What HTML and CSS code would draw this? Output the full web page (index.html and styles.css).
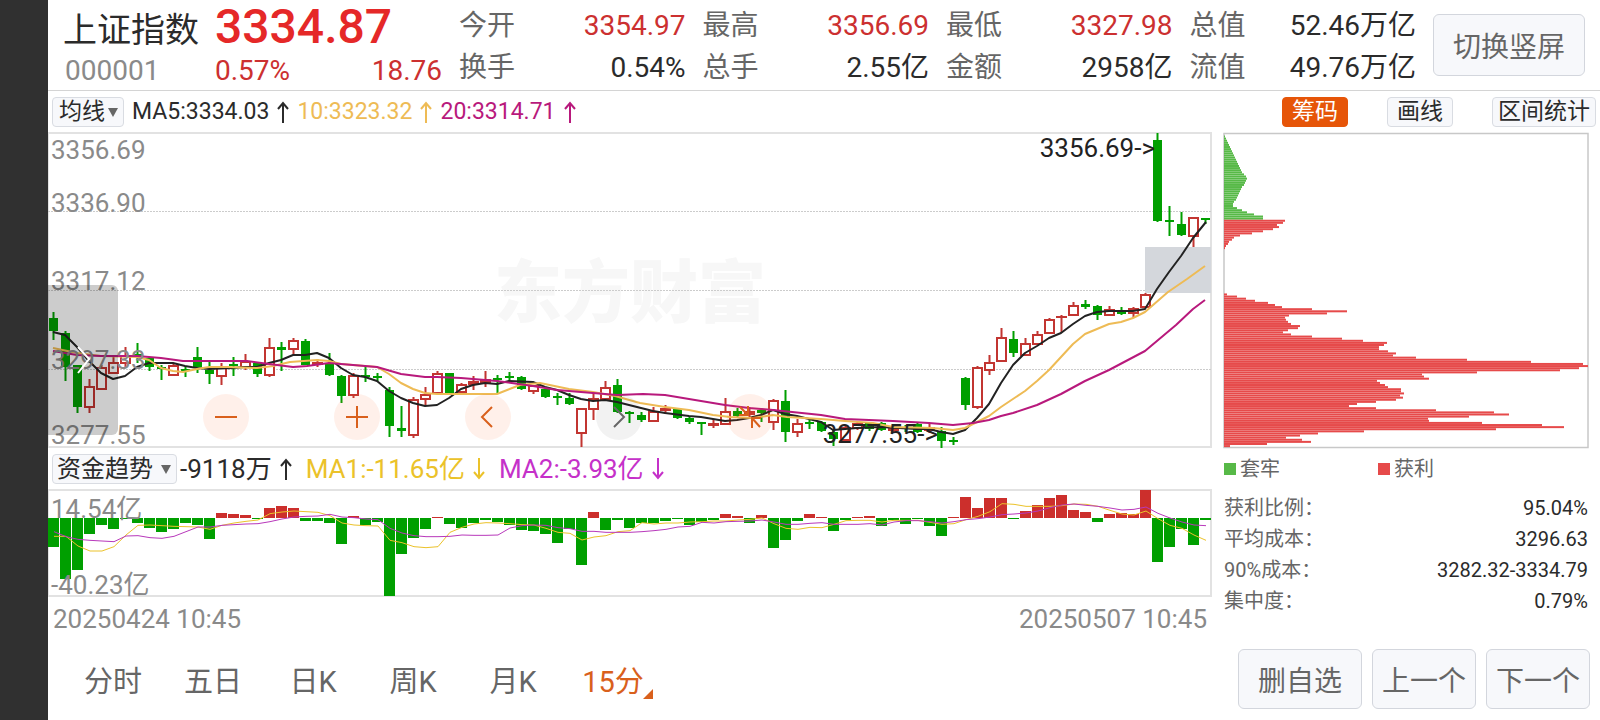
FILE: index.html
```html
<!DOCTYPE html>
<html lang="zh-CN">
<head>
    <meta charset="UTF-8">
    <meta name="viewport" content="width=device-width, initial-scale=1.0">
    <title>上证指数 000001</title>
    <link rel="stylesheet" href="styles.css">
</head>
<body>
    <header class="quote">
        <div class="summary">
            <h1 class="name">上证指数</h1>
            <div class="price">3334.87</div>
            <div class="code">000001</div>
            <div class="change"><span>0.57%</span><span>18.76</span></div>
        </div>
        <dl class="stats">
            <div><dt>今开</dt><dd class="up">3354.97</dd></div>
            <div><dt>最高</dt><dd class="up">3356.69</dd></div>
            <div><dt>最低</dt><dd class="up">3327.98</dd></div>
            <div><dt>总值</dt><dd>52.46万亿</dd></div>
            <div><dt>换手</dt><dd>0.54%</dd></div>
            <div><dt>总手</dt><dd>2.55亿</dd></div>
            <div><dt>金额</dt><dd>2958亿</dd></div>
            <div><dt>流值</dt><dd>49.76万亿</dd></div>
        </dl>
        <button class="btn rotate">切换竖屏</button>
    </header>

    <div class="toolbar">
        <div class="dropdown">
            <select aria-label="主图指标"><option>均线</option></select>
        </div>
        <span class="ma">MA5:3334.03<svg class="arrow" viewBox="0 0 12 22"><path d="M6 22V2M1 8L6 2L11 8"/></svg></span>
        <span class="ma ma10">10:3323.32<svg class="arrow" viewBox="0 0 12 22"><path d="M6 22V2M1 8L6 2L11 8"/></svg></span>
        <span class="ma ma20">20:3314.71<svg class="arrow" viewBox="0 0 12 22"><path d="M6 22V2M1 8L6 2L11 8"/></svg></span>
        <div class="tools">
            <button class="tool active">筹码</button>
            <button class="tool">画线</button>
            <button class="tool">区间统计</button>
        </div>
    </div>

    <main class="content">
        <section class="charts">
            <div class="kline">
                <div class="watermark">东方财富</div>
                <svg id="kline" viewBox="0 0 1164 316" preserveAspectRatio="none"></svg>
                <span class="label l1">3356.69</span>
                <span class="label l2">3336.90</span>
                <span class="label l3">3317.12</span>
                <span class="label l4">3297.33</span>
                <span class="label l5">3277.55</span>
                <span class="label high">3356.69-&gt;</span>
                <span class="label low">3277.55-&gt;</span>
                <button class="drawer" aria-label="展开"><svg viewBox="0 0 14 28"><path d="M1 1L12 13L1 27"/></svg></button>
                <div class="controls">
                    <button aria-label="缩小"><svg viewBox="0 0 46 46"><path d="M12 23H34"/></svg></button>
                    <button aria-label="放大"><svg viewBox="0 0 46 46"><path d="M12 23H34M23 12V34"/></svg></button>
                    <button aria-label="左移"><svg viewBox="0 0 46 46"><path d="M27 13L17 23L27 33"/></svg></button>
                    <button class="off" aria-label="右移"><svg viewBox="0 0 46 46"><path d="M18 13L28 23L18 33"/></svg></button>
                    <button aria-label="收起"><svg viewBox="0 0 46 46"><path d="M21 12V21H12M13 13L21 21M25 34V24H34M25 24L33 33"/></svg></button>
                </div>
            </div>

            <div class="toolbar fund-bar">
                <div class="dropdown wide">
                    <select aria-label="副图指标"><option>资金趋势</option></select>
                </div>
                <span class="ma">-9118万<svg class="arrow" viewBox="0 0 12 22"><path d="M6 22V2M1 8L6 2L11 8"/></svg></span>
                <span class="ma ma1">MA1:-11.65亿<svg class="arrow" viewBox="0 0 12 22"><path d="M6 0V20M1 14L6 20L11 14"/></svg></span>
                <span class="ma ma2">MA2:-3.93亿<svg class="arrow" viewBox="0 0 12 22"><path d="M6 0V20M1 14L6 20L11 14"/></svg></span>
            </div>

            <div class="fund">
                <svg id="fund" viewBox="0 0 1164 106" preserveAspectRatio="none"></svg>
                <span class="label fund-max">14.54亿</span>
                <span class="label fund-min">-40.23亿</span>
            </div>
            <div class="dates"><span>20250424 10:45</span><span>20250507 10:45</span></div>
        </section>

        <aside class="chips">
            <svg id="chips" viewBox="0 0 364 316" preserveAspectRatio="none"></svg>
            <div class="legend"><span class="loss">套牢</span><span class="gain">获利</span></div>
            <dl class="costs">
                <div><dt>获利比例：</dt><dd>95.04%</dd></div>
                <div><dt>平均成本：</dt><dd>3296.63</dd></div>
                <div><dt>90%成本：</dt><dd>3282.32-3334.79</dd></div>
                <div><dt>集中度：</dt><dd>0.79%</dd></div>
            </dl>
        </aside>
    </main>

    <footer class="bottom">
        <nav class="tabs">
            <button>分时</button>
            <button>五日</button>
            <button>日K</button>
            <button>周K</button>
            <button>月K</button>
            <button class="active">15分</button>
        </nav>
        <div class="actions">
            <button class="btn remove">删自选</button>
            <button class="btn">上一个</button>
            <button class="btn">下一个</button>
        </div>
    </footer>

    <script src="chart.js"></script>
</body>
</html>
```

FILE: styles.css
```css
* {
    box-sizing: border-box;
}
body {
    margin: 0;
    min-height: 100vh;
    border-left: 48px solid #303030;
    background: #fff;
    color: #2b2b2b;
    font-family: Roboto, "Noto Sans CJK SC", sans-serif;
    font-size: 26px;
}
h1, dl, dd {
    margin: 0;
    font-weight: normal;
}
button, select {
    padding: 0;
    border: none;
    background: none;
    color: inherit;
    font-family: inherit;
    cursor: pointer;
}

/* header */
.quote {
    display: flex;
    gap: 17px;
    height: 91px;
    padding: 5px 15px 0;
    border-bottom: 1px solid #d4d4d4;
    font-size: 28px;
}
.summary {
    display: grid;
    grid-template-columns: 152px 227px;
    grid-template-rows: 44px 42px;
    line-height: 44px;
}
.name {
    padding-top: 4px;
    font-size: 34px;
    line-height: 42px;
}
.price {
    color: #e52828;
    font-size: 48px;
    font-weight: 500;
}
.code {
    padding-left: 2px;
    color: #8a8a8a;
}
.change {
    display: flex;
    justify-content: space-between;
    color: #cc3030;
}
.stats {
    flex: 1;
    display: grid;
    grid-template-columns: repeat(4, 1fr);
    column-gap: 17px;
    line-height: 42px;
    height: 84px;
}
.stats div, .costs div {
    display: flex;
    justify-content: space-between;
}
.stats dt {
    color: #666;
}
.stats .up {
    color: #cc3030;
}
.btn {
    width: 104px;
    height: 60px;
    border: 1px solid #d3d6dd;
    border-radius: 6px;
    background: #f7f8fb;
    color: #666;
    font-size: 28px;
}
.rotate {
    width: 152px;
    height: 62px;
    margin-top: 9px;
}

/* indicator bars */
.toolbar {
    display: flex;
    align-items: center;
    gap: 8px;
    height: 41px;
    padding: 0 4px;
    font-size: 23px;
}
.dropdown {
    position: relative;
}
.dropdown::after {
    content: "";
    position: absolute;
    right: 6px;
    top: 11px;
    border: 5px solid transparent;
    border-top: 9px solid #666;
    border-bottom: 0;
    pointer-events: none;
}
.dropdown select, .tool {
    display: block;
    height: 30px;
    padding: 0 6px;
    border: 1px solid #d9dce2;
    border-radius: 4px;
    background: #f7f8fb;
    font-size: 23px;
    line-height: 28px;
}
.dropdown select {
    width: 72px;
    appearance: none;
}
.wide select {
    width: 125px;
    padding: 0 4px;
    font-size: 24px;
}
.ma {
    display: flex;
    align-items: center;
    gap: 8px;
    line-height: 30px;
}
.arrow {
    width: 12px;
    height: 22px;
    fill: none;
    stroke: currentColor;
    stroke-width: 2;
}
.ma10 { color: #eebb55; }
.ma20 { color: #b8197c; }
.ma1 { color: #ebc22a; }
.ma2 { color: #c531c9; }
.tools {
    display: flex;
    gap: 39px;
    margin-left: auto;
}
.tool {
    padding: 0 9px;
}
.tool:last-child {
    padding: 0 5px;
}
.tool.active {
    border-color: #e65508;
    background: #e65508;
    color: #fff;
}
.fund-bar {
    height: 42px;
    gap: 14px;
    font-size: 26px;
}
.fund-bar .dropdown {
    margin-right: -11px;
}

/* charts */
.content {
    display: grid;
    grid-template-columns: 1fr 364px;
    column-gap: 12px;
    padding-right: 12px;
}
.content > * {
    min-width: 0;
}
.kline, .fund {
    position: relative;
}
#kline, #fund, #chips {
    display: block;
    width: 100%;
    overflow: visible;
}
#kline, #chips { height: 316px; }
#fund { height: 106px; }
#kline {
    position: relative;
}
.watermark {
    position: absolute;
    top: 126px;
    left: 0;
    right: 0;
    color: #f7f7f7;
    font-size: 68px;
    font-weight: 900;
    line-height: 72px;
    text-align: center;
}
.label {
    position: absolute;
    left: 3px;
    color: #8a8a8a;
    line-height: 30px;
}
.l1 { top: 3px; }
.l2 { top: 56px; }
.l3 { top: 134px; }
.l4 { top: 213px; }
.l5 { top: 288px; }
.high, .low {
    left: auto;
    color: #222;
}
.high { top: 1px; right: 57px; }
.low { top: 287px; right: 274px; }
.drawer {
    position: absolute;
    left: 0;
    top: 153px;
    width: 70px;
    height: 150px;
    border-radius: 0 6px 6px 0;
    background: rgba(0, 0, 0, 0.2);
}
.drawer svg {
    display: block;
    width: 14px;
    height: 28px;
    margin-left: 29px;
    fill: none;
    stroke: #fff;
    stroke-width: 2;
}
.controls {
    position: absolute;
    left: 155px;
    top: 262px;
    display: flex;
    gap: 85px;
}
.controls button {
    width: 46px;
    height: 46px;
    border-radius: 50%;
    background: rgba(255, 90, 20, 0.09);
    color: #d9601c;
}
.controls .off {
    background: rgba(0, 0, 0, 0.05);
    color: #666;
}
.controls svg {
    display: block;
    fill: none;
    stroke: currentColor;
    stroke-width: 2;
}
.fund-max { top: 4px; }
.fund-min { top: 80px; }
.dates {
    display: flex;
    justify-content: space-between;
    padding: 4px 5px 0;
    color: #8a8a8a;
    line-height: 38px;
}

/* chip distribution */
.legend {
    display: grid;
    grid-template-columns: 154px 1fr;
    padding-top: 6px;
    color: #666;
    font-size: 20px;
    line-height: 30px;
}
.legend span {
    display: flex;
    align-items: center;
    gap: 4px;
}
.legend span::before {
    content: "";
    width: 12px;
    height: 12px;
    background: #57b947;
}
.legend .gain::before {
    background: #e64a4a;
}
.costs {
    padding-top: 9px;
    font-size: 20px;
    line-height: 31px;
}
.costs dt {
    color: #666;
}

/* footer */
.bottom {
    display: flex;
    justify-content: space-between;
    align-items: center;
    padding: 11px 10px 10px 15px;
}
.tabs {
    display: flex;
}
.tabs button {
    position: relative;
    width: 100px;
    height: 60px;
    color: #666;
    font-size: 29px;
}
.tabs .active {
    color: #d9601c;
}
.tabs .active::after {
    content: "";
    position: absolute;
    right: 10px;
    bottom: 10px;
    border: 5px solid;
    border-top-color: transparent;
    border-left-color: transparent;
}
.actions {
    display: flex;
    gap: 10px;
}
.remove {
    width: 124px;
}
```

FILE: chart.js
```js
const RED = '#c23531', GREEN = '#009f00';
const STEP = 12;

// body top, body bottom, high, low, r = rising
const candles = `186,199,180,208 201,235,199,249 233,275,233,281 254,275,247,281,r 235,257,233,258,r 230,241,225,242,r
223,231,215,235,r 222,224,211,231 226,235,225,239 235,237,233,248 233,243,231,243,r 237,239,235,245
225,235,215,241 238,242,230,252 234,244,231,253,r 232,234,225,244 229,235,222,238,r 231,242,231,245
215,243,206,245,r 215,218,210,239 208,217,206,222,r 209,233,207,233 230,233,227,235,r 231,243,221,244
244,264,243,271 243,263,241,266,r 243,245,235,250 244,246,241,249 258,294,255,305 296,299,274,305
267,303,265,306,r 262,267,255,273,r 241,261,239,261,r 241,261,241,262 252,260,251,263,r 249,253,244,258,r
247,251,239,255,r 246,248,243,261 244,246,240,248 245,257,244,258 253,259,253,262,r 257,265,257,266
264,266,261,273 266,272,261,273 276,301,276,315,r 266,277,261,288,r 255,267,249,268,r 253,280,247,281
280,282,279,291 283,288,280,290 279,289,275,290,r 276,279,273,282,r 277,286,276,287 286,290,284,292
290,292,290,303 291,294,287,296,r 279,292,266,293,r 279,284,276,285 279,283,275,285,r 278,281,276,290
268,290,267,298,r 269,300,258,310 291,300,287,305,r 290,292,288,297 290,299,289,300 300,307,298,314
295,308,293,309,r 291,296,290,298,r 291,297,290,299 291,298,290,299 295,299,294,300,r 295,297,293,300
292,300,291,301 295,299,291,301,r 299,309,295,316 308,310,305,313 246,273,245,278 235,275,234,277,r
230,238,223,243,r 205,229,196,230,r 207,221,199,225 211,223,206,224,r 202,212,199,212,r 187,201,186,202,r
184,186,183,200,r 173,183,170,184,r 172,175,168,177 174,183,173,188 177,183,174,183,r 178,182,175,183
176,181,175,186,r 162,175,161,176,r 8,89,1,90 88,90,74,104 92,103,80,104 85,104,85,115,r 86,88,86,92`;

const ma5 = '5,200 17,203 29,215 41,229 53,241 65,247 77,244 89,235 101,231 125,231 137,234 149,236 161,237 185,236 197,235 209,235 221,231 233,228 245,223 257,223 269,221 281,226 293,236 305,243 317,245 329,249 341,259 353,266 365,271 377,274 389,273 401,266 413,257 425,253 437,251 449,252 461,249 485,250 497,255 509,258 521,263 533,267 545,269 557,268 569,270 581,273 605,279 617,281 641,284 653,285 665,287 677,289 689,288 701,286 713,283 725,278 737,282 749,284 761,287 773,290 785,298 797,297 809,296 833,295 869,297 881,297 893,300 905,302 917,298 929,286 941,272 953,251 965,233 977,221 989,214 1001,206 1013,201 1025,192 1037,184 1049,180 1061,179 1085,179 1097,177 1109,157 1121,140 1133,124 1145,106 1158,90';
const ma10 = '5,216 29,221 53,224 89,225 101,228 113,236 125,239 135,240 149,237 161,235 179,235 209,236 225,234 242,230 269,228 281,229 293,232 329,235 341,242 353,251 365,257 377,261 389,262 413,262 449,262 472,253 492,251 521,257 545,260 567,264 592,271 617,275 641,278 665,283 682,285 705,286 725,283 739,285 773,287 797,289 825,291 845,295 885,296 905,298 917,296 941,284 953,275 977,259 989,249 1001,238 1013,225 1025,212 1037,202 1061,192 1073,190 1085,186 1097,180 1120,160 1139,147 1157,134';
const ma20 = '5,219 29,223 53,224 89,224 113,226 135,229 199,229 221,232 245,235 259,234 281,231 329,235 353,242 377,245 389,245 413,246 449,249 485,254 509,258 533,260 569,263 595,262 617,263 653,269 677,273 701,276 725,278 773,283 797,287 845,289 881,291 905,293 925,291 941,288 953,284 965,281 989,273 1013,262 1037,249 1061,238 1097,219 1128,193 1145,177 1157,168';

// bar ends, above 28 is inflow and below is outflow
const flow = [57,89,80,44,35,39,29,33,38,42,39,33,35,49,23,24,25,29,18,16,18,31,31,33,54,26,35,32,106,64,48,39,27,34,38,33,30,32,35,40,41,44,53,39,75,22,40,30,38,33,33,31,29,35,32,30,24,26,33,25,58,50,31,24,27,41,30,27,26,36,30,34,29,36,46,27,7,18,8,8,29,21,15,8,5,20,22,32,24,23,24,0,72,57,39,55,30];
const flowMa1 = [274,274,303,318,318,305,270,241,240,242,244,245,246,253,241,234,229,225,206,201,198,200,202,212,234,240,242,243,286,293,305,308,305,262,247,237,233,234,236,239,240,250,262,265,285,276,272,260,257,233,237,234,234,231,230,228,228,225,223,219,236,250,253,247,248,238,227,226,226,231,226,226,226,232,238,236,224,214,200,176,178,184,184,184,182,177,178,184,196,207,210,198,221,241,250,270,286];
const flowMa2 = [260,275,283,286,288,290,273,272,278,280,274,260,246,246,241,239,237,236,230,222,216,214,213,208,216,218,222,224,250,264,272,275,275,274,270,271,271,270,249,242,240,241,248,251,259,259,262,262,262,260,257,253,246,244,232,234,230,229,228,225,231,238,238,235,233,238,238,238,236,240,231,227,227,230,234,230,224,221,216,209,207,204,198,188,180,177,181,184,189,195,193,186,205,219,231,240,242];

// chip distribution, top to bottom
const trapped = [0,1,2,3,4,5,6,7,8,9,10,11,12,13,14,15,16,17,18,20,22,23,22,21,20,18,17,16,15,14,13,12,10,9,9,13,18,23,30,39,39];
const profit = [61,59,53,55,49,39,28,16,10,8,5,4,2,1].concat(Array(21).fill(0), [3,13,22,31,44,51,58,88,123,103,65,61,62,64,67,76,74,64,59,67,88,118,139,163,160,155,155,164,172,169,192,243,307,359,364,355,336,253,198,200,205,153,156,161,164,177,177,180,176,179,172,152,133,125,152,212,270,285,245,204,205,258,318,340,272,140,94,76,62,78,87,43,6]);

function rect(x, y, w, h, fill, extra = '') {
    return `<rect x="${x}" y="${y}" width="${w}" height="${h}" fill="${fill}" ${extra}/>`;
}
function line(points, color, width) {
    return `<polyline points="${points}" fill="none" stroke="${color}" stroke-width="${width}" stroke-linejoin="round"/>`;
}

function drawKline() {
    let out = rect(0, 1, 1163, 314, 'none', 'stroke="#e2e2e2" stroke-width="2"');
    for (const y of [79.5, 158.5, 237.5]) {
        out += `<path d="M0 ${y}H1163" stroke="#ccc" stroke-dasharray="2 1"/>`;
    }
    out += rect(1097, 115, 66, 46, '#d4d7dc');
    candles.split(/\s+/).forEach((item, i) => {
        const [top, bottom, high, low, rising] = item.split(',');
        const x = i * STEP + 1;
        const h = bottom - top;
        const color = rising ? RED : GREEN;
        out += rect(x + 3.5, high, 2, low - high, color);
        if (rising && h > 4) {
            out += rect(x, +top + 1, 9, h - 1, '#fff', `stroke="${RED}" stroke-width="2"`);
        } else if (rising) {
            out += rect(x - 1, top, 11, Math.max(h, 2), color);
        } else {
            out += rect(x, top, 9, Math.max(h, 2), color);
        }
    });
    out += line(ma5, '#222', 2) + line(ma10, '#eebb55', 2) + line(ma20, '#b8197c', 2);
    document.getElementById('kline').innerHTML = out;
}

function drawFund() {
    const zero = 28;
    const toPoints = list => list.map((v, i) => `${i * STEP + 6},${v / 3 - 45}`).join(' ');
    let out = rect(0, 0, 1163, 106, 'none', 'stroke="#e2e2e2" stroke-width="2"');
    flow.forEach((v, i) => {
        out += rect(i * STEP, Math.min(v, zero), 11, Math.abs(v - zero), v < zero ? '#cc2f2c' : GREEN);
    });
    out += line(toPoints(flowMa1), '#ebc22a', 1) + line(toPoints(flowMa2), '#b838bb', 1);
    document.getElementById('fund').innerHTML = out;
}

function drawChips() {
    let out = rect(0, 1.5, 364, 314, 'none', 'stroke="#c8c8c8" stroke-width="1.5"');
    trapped.concat(profit).forEach((w, i) => {
        out += rect(0, 1.4 + i * 2.106, w, 2, i < trapped.length ? '#57b947' : '#e64a4a');
    });
    document.getElementById('chips').innerHTML = out;
}

drawKline();
drawFund();
drawChips();
```
